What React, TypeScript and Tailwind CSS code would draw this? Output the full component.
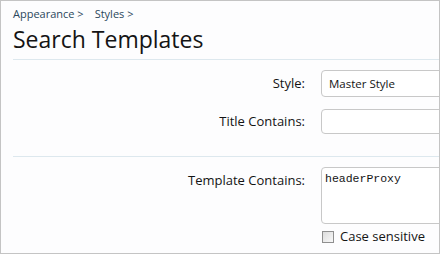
export default function App() {
  return (
    <div className="w-[440px] h-[254px] overflow-hidden border border-[#c4c4c4] bg-[#fdfdfe] font-['Open_Sans',sans-serif] text-[#141414]">
      <div className="pl-[12px] pt-[4px]">
        <div className="flex gap-[11px] text-[11px] text-[#2b485c] h-[18px] items-center">
          <span>Appearance &gt;</span>
          <span>Styles &gt;</span>
        </div>
        <h1 className="text-[23px] leading-[32px] font-normal">Search Templates</h1>
        <div className="mt-[4px] border-t border-[#dde8ee]" />
        <div className="flex flex-col gap-[12px] pt-[10px] pb-[22px]">
          <Row label="Style:">
            <div className="w-[200px] h-[27px] border border-[#c8c8c8] rounded-[4px] bg-white px-[7px] flex items-center text-[11.5px]">
              Master Style
            </div>
          </Row>
          <Row label="Title Contains:">
            <div className="w-[200px] h-[25px] border border-[#c8c8c8] rounded-[4px] bg-white" />
          </Row>
        </div>
        <div className="border-t border-[#dde8ee]" />
        <div className="pt-[10px] flex">
          <div className="w-[308px] shrink-0 pr-[16px] text-right text-[13px] pt-[4px]">Template Contains:</div>
          <div className="flex flex-col">
            <div className="w-[200px] h-[57px] border border-[#c8c8c8] rounded-[4px] bg-white px-[3px] pt-[2px] font-['Liberation_Mono',monospace] text-[11.5px]">
              headerProxy
            </div>
            <label className="flex items-center gap-[6px] mt-[3px] ml-[1px] text-[13px]">
              <span className="w-[12px] h-[12px] border border-[#8f8f8f] bg-gradient-to-br from-[#dcdcdc] to-[#f8f8f8]" />
              Case sensitive
            </label>
          </div>
        </div>
      </div>
    </div>
  );
}

function Row({ label, children }: { label: string; children: React.ReactNode }) {
  return (
    <div className="flex items-center">
      <div className="w-[308px] shrink-0 pr-[16px] text-right text-[13px]">{label}</div>
      <div className="shrink-0">{children}</div>
    </div>
  );
}
